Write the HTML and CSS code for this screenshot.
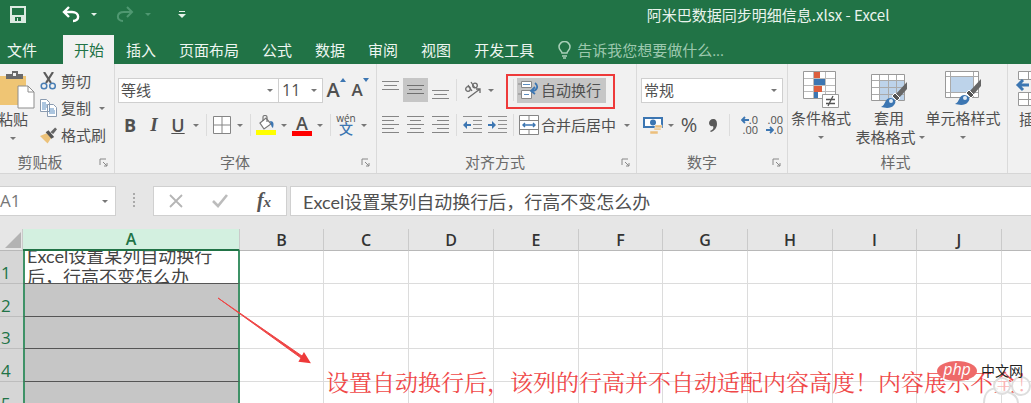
FILE: index.html
```html
<!DOCTYPE html>
<html lang="zh-CN">
<head>
<meta charset="utf-8">
<title>阿米巴数据同步明细信息.xlsx - Excel</title>
<link rel="stylesheet" href="styles.css">
</head>
<body>
<header class="titlebar">
  <div class="quick">
    <button class="quick-btn" aria-label="保存"><svg width="16" height="17" viewBox="0 0 16 17"><path d="M1 1h14v15H1z" fill="none" stroke="#dcebe2" stroke-width="2"/><path d="M1 9h14v7H1z" fill="#dcebe2"/><path d="M5 11h6v4H5z" fill="#217346"/><path d="M7 12h1v3H7z" fill="#dcebe2"/></svg></button>
    <button class="quick-btn undo" aria-label="撤消"><svg width="18" height="17" viewBox="0 0 18 17"><path d="M7 1L2 6l5 5M2 6h8c8 0 8 9 1 9" fill="none" stroke="#fff" stroke-width="2.4"/></svg></button>
    <button class="caret-btn" aria-label="撤消列表"><span class="caret light"></span></button>
    <button class="quick-btn redo" aria-label="恢复"><svg width="18" height="17" viewBox="0 0 18 17"><path d="M11 1l5 5-5 5M16 6H8c-8 0-8 9-1 9" fill="none" stroke="#4f9871" stroke-width="2"/></svg></button>
    <button class="caret-btn" aria-label="恢复列表"><span class="caret dim"></span></button>
    <button class="caret-btn customise" aria-label="自定义快速访问工具栏"><svg width="8" height="7" viewBox="0 0 8 7"><path d="M1 0h6v1H1zM0 3h8L4 7z" fill="#e6f1ea"/></svg></button>
  </div>
  <h1 class="doc-title">阿米巴数据同步明细信息.xlsx - Excel</h1>
</header>
<nav class="tabs">
  <button class="tab file">文件</button>
  <button class="tab active">开始</button>
  <button class="tab">插入</button>
  <button class="tab">页面布局</button>
  <button class="tab">公式</button>
  <button class="tab">数据</button>
  <button class="tab">审阅</button>
  <button class="tab">视图</button>
  <button class="tab">开发工具</button>
  <label class="tell">
    <svg width="13" height="18" viewBox="0 0 13 18"><path d="M4 12c0-2-3-3-3-6a5.300 5.300 0 0 1 11 0c0 3-3 4-3 6zM4 15h5M5 17h3" fill="none" stroke="#a9d0b9" stroke-width="1.500"/></svg>
    <input type="text" placeholder="告诉我您想要做什么..." aria-label="告诉我您想要做什么">
  </label>
</nav>

<div class="ribbon">
  <section class="group clipboard">
    <div class="clip-body">
      <button class="big paste">
        <svg width="44" height="38" viewBox="0 0 44 38"><path d="M4 5h31v29H4z" fill="#efc574"/><path d="M15 6V3h6V0h6v3h5v5H15z" fill="#6a6a6a"/><path d="M22 2h3v3h-3z" fill="#f1f1f1"/><path d="M27 15h10l6 6v16H27z" fill="#fff" stroke="#8d8d8d"/><path d="M37 15v6h6" fill="none" stroke="#8d8d8d"/></svg>
        <span>粘贴</span><span class="caret"></span>
      </button>
      <div class="clip-list">
        <button class="item"><svg width="17" height="18" viewBox="0 0 17 18"><path d="M4 0l7 11M13 0L6 11" stroke="#5c5c5c" stroke-width="2.200"/><circle cx="4" cy="14" r="2.800" fill="none" stroke="#4a7fb5" stroke-width="1.500"/><circle cx="12.500" cy="14" r="2.800" fill="none" stroke="#4a7fb5" stroke-width="1.500"/></svg>剪切</button>
        <button class="item"><svg width="17" height="18" viewBox="0 0 17 18"><path d="M.5.500h6l3 3v9h-9zM7.500 5.500h6l3 3v9h-9z" fill="#fff" stroke="#8a9bb0"/><path d="M2 4h4M2 6h5M2 8h5M2 10h4M9 10h5M9 12h6M9 14h6" stroke="#5b8dc0"/></svg>复制<span class="caret"></span></button>
        <button class="item"><svg width="17" height="17" viewBox="0 0 18 17"><path d="M0 9l7-3 5 5-4 6z" fill="#ecc27a"/><path d="M6 5l3-2 6 7-3 2z" fill="#555"/><path d="M11 5l5-5 2 2-4 5z" fill="#666"/></svg>格式刷</button>
      </div>
    </div>
    <footer class="group-foot"><h2>剪贴板</h2><button class="launch" aria-label="剪贴板设置"><svg width="9" height="9" viewBox="0 0 9 9"><path d="M1 7V1h6M4 4l4 4M8 5v3H5" fill="none" stroke="#888"/></svg></button></footer>
  </section>

  <section class="group font">
    <div class="group-body">
      <div class="row">
        <div class="pick wide"><select aria-label="字体"><option>等线</option></select></div>
        <div class="pick size"><select aria-label="字号"><option>11</option></select></div>
        <button class="tool grow" aria-label="增大字号"><span class="letter">A</span><svg width="6" height="12" viewBox="0 0 6 12"><path d="M0 4h6L3 0z" fill="#3c76b2"/></svg></button>
        <button class="tool shrink" aria-label="减小字号"><span class="letter">A</span><svg width="6" height="12" viewBox="0 0 6 12"><path d="M0 0h6L3 4z" fill="#3c76b2"/></svg></button>
      </div>
      <div class="row">
        <button class="tool bold">B</button>
        <button class="tool italic">I</button>
        <button class="tool under">U</button>
        <button class="caret-btn" aria-label="下划线样式"><span class="caret"></span></button>
        <i class="sep"></i>
        <button class="tool" aria-label="边框"><svg width="18" height="18" viewBox="0 0 18 18"><path d="M.5.500h17v17H.5zM9 1v16M1 9h16" fill="#fff" stroke="#858585"/></svg></button>
        <button class="caret-btn" aria-label="边框样式"><span class="caret"></span></button>
        <i class="sep"></i>
        <button class="tool" aria-label="填充颜色"><svg width="20" height="20" viewBox="0 0 20 20"><path d="M4 8l6-5 5 6-7 5z" fill="#fff" stroke="#777" stroke-width="1.200"/><path d="M7 6V2c0-2 4-2 4 0v5" fill="none" stroke="#777" stroke-width="1.200"/><path d="M14 6c4 0 4 3 3 7-2-1-2-4-3-7z" fill="#3c76b2"/><path d="M0 15h20v5H0z" fill="#ff0"/></svg></button>
        <button class="caret-btn" aria-label="填充颜色列表"><span class="caret"></span></button>
        <button class="tool colour" aria-label="字体颜色"><span>A</span></button>
        <button class="caret-btn" aria-label="字体颜色列表"><span class="caret"></span></button>
        <i class="sep"></i>
        <button class="tool pinyin" aria-label="拼音"><span>wén</span><b>文</b></button>
        <button class="caret-btn" aria-label="拼音设置"><span class="caret"></span></button>
      </div>
    </div>
    <footer class="group-foot"><h2>字体</h2><button class="launch" aria-label="字体设置"><svg width="9" height="9" viewBox="0 0 9 9"><path d="M1 7V1h6M4 4l4 4M8 5v3H5" fill="none" stroke="#888"/></svg></button></footer>
  </section>

  <section class="group align">
    <div class="group-body">
      <div class="row">
        <button class="tool" aria-label="顶端对齐"><svg width="17" height="20" viewBox="0 0 17 20"><path d="M0 1.500h17M2 5.500h13M0 9.500h17" stroke="#858585"/></svg></button>
        <button class="tool pressed" aria-label="垂直居中"><svg width="17" height="20" viewBox="0 0 17 20"><path d="M0 5.500h17M2 9.500h13M0 13.500h17" stroke="#707070"/></svg></button>
        <button class="tool" aria-label="底端对齐"><svg width="17" height="20" viewBox="0 0 17 20"><path d="M0 10.500h17M2 14.500h13M0 18.500h17" stroke="#858585"/></svg></button>
        <i class="sep"></i>
        <button class="tool" aria-label="方向"><svg width="18" height="18" viewBox="0 0 18 18"><g fill="none" stroke="#6b6b6b" stroke-width="1.300"><circle cx="4" cy="8" r="2.300"/><path d="M4 4l4 6M7 1l4 6"/><circle cx="11" cy="4.500" r="2.300"/><path d="M4 17L16 8M12 8h4v4"/></g></svg></button>
        <button class="caret-btn" aria-label="方向列表"><span class="caret"></span></button>
        <i class="sep last"></i>
        <div class="marked">
          <button class="item wrap pressed"><svg width="21" height="18" viewBox="0 0 21 18"><path d="M3.500.500h10v6h-10zM3.500 9.500h10v8h-10z" fill="#fff" stroke="#888"/><path d="M5 3.500h7M6 13.500h5" stroke="#5b8dc0"/><path d="M0 3h3M0 13h3" stroke="#888"/><path d="M17 2c4 3 2 8-3 8M17 6l-4 4 4 3" fill="none" stroke="#3c76b2" stroke-width="1.800"/></svg>自动换行</button>
          <span class="marker"></span>
        </div>
      </div>
      <div class="row">
        <button class="tool" aria-label="左对齐"><svg width="17" height="18" viewBox="0 0 17 18"><path d="M0 .500h17M0 4.500h12M0 8.500h17M0 12.500h12M0 16.500h17" stroke="#858585"/></svg></button>
        <button class="tool" aria-label="居中"><svg width="17" height="18" viewBox="0 0 17 18"><path d="M0 .500h17M3 4.500h11M0 8.500h17M3 12.500h11M0 16.500h17" stroke="#858585"/></svg></button>
        <button class="tool" aria-label="右对齐"><svg width="17" height="18" viewBox="0 0 17 18"><path d="M0 .500h17M5 4.500h12M0 8.500h17M5 12.500h12M0 16.500h17" stroke="#858585"/></svg></button>
        <i class="sep"></i>
        <button class="tool" aria-label="减少缩进量"><svg width="19" height="18" viewBox="0 0 19 18"><path d="M0 .500h19M10 4.500h9M10 8.500h9M10 12.500h9M0 16.500h19" stroke="#909090"/><path d="M8 8h-4v-3L0 9l4 4v-3h4z" fill="#3c76b2"/></svg></button>
        <button class="tool" aria-label="增加缩进量"><svg width="19" height="18" viewBox="0 0 19 18"><path d="M0 .500h19M10 4.500h9M10 8.500h9M10 12.500h9M0 16.500h19" stroke="#909090"/><path d="M0 8h4V5l4 4-4 4v-3H0z" fill="#3c76b2"/></svg></button>
        <i class="sep"></i>
        <button class="item merge"><svg width="20" height="20" viewBox="0 0 20 20"><path d="M.5.500h19v19H.5z" fill="#fff" stroke="#858585"/><path d="M1 5.500h18M1 14.500h18M10 1v4M10 15v4" stroke="#858585"/><path d="M4 10h12M6 8l-2 2 2 2M14 8l2 2-2 2" fill="none" stroke="#3c76b2" stroke-width="1.400"/></svg>合并后居中<span class="caret"></span></button>
      </div>
    </div>
    <footer class="group-foot"><h2>对齐方式</h2><button class="launch" aria-label="对齐设置"><svg width="9" height="9" viewBox="0 0 9 9"><path d="M1 7V1h6M4 4l4 4M8 5v3H5" fill="none" stroke="#888"/></svg></button></footer>
  </section>

  <section class="group number">
    <div class="group-body">
      <div class="row">
        <div class="pick format"><select aria-label="数字格式"><option>常规</option></select></div>
      </div>
      <div class="row">
        <button class="tool" aria-label="会计数字格式"><svg width="20" height="19" viewBox="0 0 20 19"><path d="M1 2h18v9H1z" fill="#fff" stroke="#3c76b2" stroke-width="2"/><circle cx="10" cy="6.500" r="3" fill="#3c76b2"/><path d="M12 9h7v3h-7zM11 12h7v2h-7zM7 15h8v3H7z" fill="#ecbf7c" stroke="#f1f1f1" stroke-width=".5"/></svg></button>
        <button class="caret-btn" aria-label="会计格式列表"><span class="caret"></span></button>
        <button class="tool percent">%</button>
        <button class="tool comma" aria-label="千位分隔样式"><svg width="8" height="13" viewBox="0 0 8 13"><path d="M1 12c3-1 4-3 3-5-2 1-4-1-4-3s2-4 4-4c3 0 4 2 4 5 0 4-3 7-6 8z" fill="#5a5a5a"/></svg></button>
        <i class="sep"></i>
        <button class="tool digits" aria-label="增加小数位数"><span><svg width="8" height="8" viewBox="0 0 8 8"><path d="M8 4H2M4 1L1 4l3 3" fill="none" stroke="#3c76b2" stroke-width="1.800"/></svg>.0</span><span>.00</span></button>
        <button class="tool digits" aria-label="减少小数位数"><span>.00</span><span><svg width="8" height="8" viewBox="0 0 8 8"><path d="M0 4h6M4 1l3 3-3 3" fill="none" stroke="#3c76b2" stroke-width="1.800"/></svg>.0</span></button>
      </div>
    </div>
    <footer class="group-foot"><h2>数字</h2><button class="launch" aria-label="数字设置"><svg width="9" height="9" viewBox="0 0 9 9"><path d="M1 7V1h6M4 4l4 4M8 5v3H5" fill="none" stroke="#888"/></svg></button></footer>
  </section>

  <section class="group styles">
    <div class="style-list">
      <button class="big cond">
        <svg width="38" height="38" viewBox="0 0 38 38"><path d="M1.500.500h32v27h-32z" fill="#fff" stroke="#999"/><path d="M2 7.500h31M2 14.500h31M2 20.500h31M11.500 1v26M23.500 1v26" stroke="#bbb"/><path d="M12 1h6v6h-6zM12 15h8v6h-8z" fill="#dd5f3d"/><path d="M12 8h11v6H12zM12 21h4v6h-4z" fill="#3c76b2"/><path d="M20.500 23.500h16v13h-16z" fill="#fff" stroke="#999"/><path d="M24 28.500h9M24 32.500h9M31 25l-5 10" stroke="#555" stroke-width="1.300"/></svg>
        <span>条件格式</span><span class="caret"></span>
      </button>
      <button class="big">
        <svg width="38" height="38" viewBox="0 0 38 38"><path d="M1.500 3.500h33v26h-33z" fill="#fff" stroke="#999"/><path d="M10 10h24v19H10z" fill="#bdd3ea"/><path d="M2 9.500h32M2 16.500h32M2 23.500h32M9.500 4v25M18.500 4v25M26.500 4v25" stroke="#aaa"/><path d="M37 11v7l-8 9-4-3z" fill="#666"/><path d="M25 22l5 5-3 3-5-5z" fill="#555" stroke="#fff"/><path d="M11 36c5-2 3-8 9-9 5 0 7 4 4 7-3 4-9 3-13 2z" fill="#3c76b2"/><circle cx="21" cy="30" r="2" fill="#dfeaf5"/></svg>
        <span>套用</span><span class="with-caret">表格格式<span class="caret"></span></span>
      </button>
      <button class="big cellstyle">
        <svg width="38" height="38" viewBox="0 0 38 38"><path d="M1.500.500h33v26h-33z" fill="#fff" stroke="#999"/><path d="M2 5.500h32M2 21.500h32M6.500 1v25M29.500 1v25" stroke="#aaa"/><path d="M7 6h22v15H7z" fill="#bdd3ea"/><path d="M37 8v7l-8 9-4-3z" fill="#666"/><path d="M25 19l5 5-3 3-5-5z" fill="#555" stroke="#fff"/><path d="M11 33c5-2 3-8 9-9 5 0 7 4 4 7-3 4-9 3-13 2z" fill="#3c76b2"/><circle cx="21" cy="27" r="2" fill="#dfeaf5"/></svg>
        <span>单元格样式</span><span class="caret"></span>
      </button>
    </div>
    <footer class="group-foot plain"><h2>样式</h2></footer>
  </section>

  <section class="group cells">
    <button class="big insert">
      <svg width="38" height="38" viewBox="0 0 38 38"><path d="M3.500.500h30v8h-30zM3.500 21.500h30v13h-30z" fill="#fff" stroke="#999"/><path d="M3 28.500h30M13.500 1v7M13.500 22v12" stroke="#999"/><path d="M18 14.500h18v4H18z" fill="#bdd3ea"/><path d="M14 14H3M8 9l-5 5 5 5" fill="none" stroke="#3c76b2" stroke-width="3"/></svg>
      <span>插入</span>
    </button>
  </section>
</div>

<div class="formula-bar">
  <div class="name-box pick"><select aria-label="名称框"><option>A1</option></select></div>
  <span class="grip"></span>
  <div class="entry-tools">
    <button aria-label="取消"><svg width="14" height="14" viewBox="0 0 14 14"><path d="M1 1l12 12M13 1L1 13" stroke="#b5b5b5" stroke-width="1.800"/></svg></button>
    <button aria-label="输入"><svg width="16" height="14" viewBox="0 0 16 14"><path d="M1 7l5 5L15 1" fill="none" stroke="#bcbcbc" stroke-width="2.600"/></svg></button>
    <button class="fx" aria-label="插入函数">f<small>x</small></button>
  </div>
  <input class="formula" type="text" aria-label="编辑栏" value="Excel设置某列自动换行后，行高不变怎么办">
</div>

<main class="sheet">
  <table class="grid">
    <colgroup><col class="c-head"><col class="c-a"><col class="c-n"><col class="c-w"><col class="c-w"><col class="c-w"><col class="c-n"><col class="c-w"><col class="c-w"><col class="c-n"><col class="c-w"><col class="c-w"></colgroup>
    <thead><tr><th class="corner"><svg width="16" height="16" viewBox="0 0 16 16"><path d="M16 0v16H0z" fill="#b3b3b3"/></svg></th><th class="on">A</th><th>B</th><th>C</th><th>D</th><th>E</th><th>F</th><th>G</th><th>H</th><th>I</th><th>J</th><th></th></tr></thead>
    <tbody>
      <tr><th>1</th><td class="sel first"><div class="clip">Excel设置某列自动换行后，行高不变怎么办</div></td><td></td><td></td><td></td><td></td><td></td><td></td><td></td><td></td><td></td><td></td></tr>
      <tr><th>2</th><td class="sel"></td><td></td><td></td><td></td><td></td><td></td><td></td><td></td><td></td><td></td><td></td></tr>
      <tr><th>3</th><td class="sel"></td><td></td><td></td><td></td><td></td><td></td><td></td><td></td><td></td><td></td><td></td></tr>
      <tr><th>4</th><td class="sel"></td><td></td><td></td><td></td><td></td><td></td><td></td><td></td><td></td><td></td><td></td></tr>
      <tr><th>5</th><td class="sel"></td><td></td><td></td><td></td><td></td><td></td><td></td><td></td><td></td><td></td><td></td></tr>
    </tbody>
  </table>
  <svg class="arrow" width="94" height="68" viewBox="0 0 94 68"><path d="M1 1l84 58-1 2z" fill="#ee4545" stroke="#ee4545"/><path d="M92 65l-9-1 4-7z" fill="#ee3a3a" stroke="#ee3a3a" stroke-width="2"/></svg>
  <p class="note">设置自动换行后，该列的行高并不自动适配内容高度！内容展示不全！</p>
  <svg class="watermark" width="50" height="28" viewBox="0 0 50 28"><g fill="#fff" fill-opacity=".6" stroke="#dedede" stroke-width="2"><path d="M2 28c0-12 8-16 14-14M36 28c0-8-10-14-20-10"/><circle cx="20" cy="11" r="8"/><circle cx="39" cy="11" r="9"/></g></svg>
  <div class="brand"><span class="php">php</span><span>中文网</span></div>
</main>
</body>
</html>
```
FILE: styles.css
```css
*, *::before, *::after { box-sizing: border-box; }

body {
  margin: 0;
  height: 100vh;
  overflow: hidden;
  display: flex;
  flex-direction: column;
  background: #e6e6e6;
  color: #505050;
  font: 15px/20px "Open Sans", "Noto Sans CJK SC", sans-serif;
}

button, input, select {
  margin: 0;
  padding: 0;
  border: 0;
  background: none;
  color: inherit;
  font: inherit;
  white-space: nowrap;
}

h1, h2, p { margin: 0; font: inherit; }
svg { display: block; flex: none; }

.caret {
  flex: none;
  width: 6px;
  border: 3px solid transparent;
  border-top-color: #777;
  border-bottom: 0;
}
.caret.light { border-top-color: #e6f1ea; }
.caret.dim { border-top-color: #4f9871; }
.caret-btn { flex: none; width: 12px; height: 24px; display: grid; place-items: center; }

/* Title bar */
.titlebar { display: flex; align-items: center; height: 29px; flex: none; background: #217346; color: #e9f3ed; }
.quick { width: 49%; display: flex; align-items: center; padding-left: 10px; }
.quick-btn { display: block; }
.undo { margin-left: 36px; }
.undo + .caret-btn, .redo + .caret-btn { margin-left: 8px; }
.redo { margin-left: 16px; }
.customise { margin-left: 22px; }
.doc-title { flex: 1; text-align: center; font-family: "Noto Sans CJK SC", sans-serif; }

/* Tabs */
.tabs { display: flex; align-items: flex-end; height: 35px; flex: none; background: #217346; }
.tab { height: 29px; padding: 0 11px 0 12px; color: #eef6f1; }
.tab.file { padding: 0 26px 0 7px; }
.tab.active { padding: 0 10px 0 11px; background: #f1f1f1; color: #217346; }
.tell { display: flex; align-items: center; gap: 6px; height: 29px; margin-left: 13px; }
.tell input { width: 180px; }
.tell input::placeholder { color: #9cc8ae; opacity: 1; }

/* Ribbon */
.ribbon { display: flex; height: 110px; flex: none; overflow: hidden; background: #f1f1f1; border-bottom: 1px solid #d6d6d6; }
.group { display: flex; flex-direction: column; flex: none; border-right: 1px solid #dadada; }
.group-body { flex: 1; display: flex; flex-direction: column; gap: 11px; padding-top: 14px; }
.row { display: flex; align-items: center; height: 24px; }
.group-foot { display: grid; grid-template-columns: 1fr 24px; align-items: center; height: 22px; color: #6a6a6a; text-align: center; }
.group-foot.plain { grid-template-columns: 1fr; padding-right: 4px; }
.launch { justify-self: end; padding-right: 6px; }

.tool { flex: none; width: 24px; height: 24px; display: flex; align-items: center; justify-content: center; }
.align .tool { width: 25px; }
.pressed { background: #c6c6c6; }
.item { display: flex; align-items: center; gap: 4px; }
.item .caret { margin-left: 4px; }
.sep { flex: none; width: 8px; height: 22px; display: flex; justify-content: center; }
.align .sep { width: 7px; }
.sep.last { margin-left: 13px; }
.sep::before { content: ""; width: 1px; background: #dcdcdc; }

.pick { display: grid; grid-template-columns: 1fr 16px; align-items: center; height: 25px; background: #fff; border: 1px solid #cfcfcf; }
.pick select { grid-area: 1 / 1 / 2 / 3; appearance: none; width: 100%; padding-left: 2px; }
.pick::after { content: ""; grid-area: 1 / 2; justify-self: center; width: 6px; border: 3px solid transparent; border-top-color: #777; border-bottom: 0; pointer-events: none; }

.big { display: flex; flex-direction: column; align-items: center; flex: none; line-height: 20px; }
.big > .caret { margin-top: 8px; }

/* Clipboard continues past the left edge of the window */
.clipboard { width: 125px; margin-left: -10px; }
.clip-body { flex: 1; display: flex; }
.paste { width: 46px; padding-top: 7px; }
.clip-list { display: flex; flex-direction: column; gap: 7px; padding: 7px 0 0 4px; }

.font { width: 262px; padding-left: 3px; }
.pick.wide { width: 161px; }
.pick.size { width: 44px; border-left: 0; }
.pick.size select { padding-left: 3px; font-size: 16px; }
.letter { font-size: 20px; font-weight: 600; }
.shrink .letter { font-size: 17px; }
.grow svg, .shrink svg { align-self: flex-start; }
.shrink, .grow { padding-left: 2px; }
.bold { font-size: 18px; font-weight: 700; }
.italic { font: italic 700 19px/24px "Liberation Serif", serif; }
.under { font-size: 18px; font-weight: 600; text-decoration: underline; }
.colour span { width: 20px; height: 21px; border-bottom: 5px solid #f00; font-size: 18px; font-weight: 600; line-height: 16px; text-align: center; }
.pinyin { flex-direction: column; font-size: 10px; line-height: 8px; }
.pinyin b { color: #3c76b2; font-size: 14px; font-weight: 500; line-height: 14px; }

.align { width: 260px; padding-left: 1px; }
.marked { position: relative; }
.wrap { height: 25px; padding: 0 5px 0 1px; gap: 2px; }
.marker { position: absolute; inset: -4px -9px -6px -11px; border: 2px solid #ee3a3a; pointer-events: none; }
.merge { padding-left: 2px; gap: 2px; }
.merge .caret { margin-left: 6px; }

.number { width: 151px; padding-left: 4px; }
.pick.format { width: 142px; }
.percent { font-size: 20px; }
.number .digits { width: 25px; flex-direction: column; align-items: flex-end; font-size: 11px; line-height: 10px; }
.digits span { display: flex; align-items: center; }

.styles { width: 220px; }
.style-list { flex: 1; display: flex; padding-top: 7px; }
.cond { width: 66px; }
.cond + .big { width: 70px; }
.cellstyle { width: 78px; }
.with-caret { display: flex; align-items: center; gap: 3px; padding-left: 2px; }
.style-list .big span { line-height: 19px; }
.cells { padding: 7px 0 0 7px; }

/* Formula bar */
.formula-bar { display: flex; flex: none; height: 55px; padding: 12px 0 13px; }
.formula-bar .pick, .entry-tools, .formula { height: 30px; background: #fff; border: 1px solid #d0d0d0; }
.formula-bar .name-box { width: 116px; grid-template-columns: 1fr 20px; border-left: 0; font-size: 17px; color: #777; }
.formula-bar .name-box select { padding-left: 0; }
.grip { width: 2px; height: 14px; margin: 7px 18px 0 17px; border-left: 2px dotted #aaa; }
.entry-tools { width: 134px; display: grid; grid-template-columns: repeat(3, 1fr); place-items: center; }
.fx { color: #555; font: italic 700 20px/24px "Liberation Serif", serif; }
.fx small { font-size: 15px; }
.formula { flex: 1; margin-left: 3px; padding-left: 12px; font-family: Lato, "Noto Sans CJK SC", sans-serif; font-size: 18px; border-right: 0; }

/* Sheet */
.sheet { position: relative; flex: 1; overflow: hidden; background: #fff; }
.grid { table-layout: fixed; width: 1086px; border-collapse: separate; border-spacing: 0; }
.c-head { width: 23px; }
.c-a { width: 217px; }
.c-w { width: 85px; }
.c-n { width: 84px; }
.grid th { padding: 0; font-weight: 400; }
.grid thead th { height: 22px; background: #e6e6e6; border-right: 1px solid #cacaca; border-bottom: 1px solid #b8b8b8; color: #333; font-size: 16px; line-height: 20px; font-weight: 600; }
.grid thead .on { background: #d3f0e0; color: #217346; border-bottom: 2px solid #217346; }
.grid .corner svg { margin-left: 5px; }
.grid tbody th { height: 33px; padding-left: 1px; background: #d6d6d6; border-bottom: 1px solid #bdbdbd; color: #217346; font-size: 17px; line-height: 20px; text-align: left; vertical-align: bottom; }
.grid tbody tr:nth-child(3) th { height: 32px; }
.grid td { padding: 0; border-right: 1px solid #dcdcdc; border-bottom: 1px solid #dcdcdc; }
.grid .sel { background: #c6c6c6; border-left: 2px solid #3f9267; border-right: 2px solid #3f9267; border-bottom: 1px solid #555; }
.grid .first { background: #fff; }
.clip { display: flex; align-items: center; height: 32px; padding: 0 20px 0 2px; overflow: hidden; font-family: Lato, "Noto Sans CJK SC", sans-serif; font-size: 18px; line-height: 21px; color: #444; }

/* Annotations over the sheet */
.arrow { position: absolute; left: 217px; top: 68px; }
.note { position: absolute; left: 326px; top: 139px; color: #f04848; font: 400 23px/28px "Noto Serif CJK SC", "Noto Sans CJK SC", serif; white-space: nowrap; }
.watermark { position: absolute; right: -1px; bottom: 0; }
.brand { position: absolute; left: 937px; top: 132px; display: flex; align-items: center; gap: 4px; color: #222; font-size: 14px; }
.php { width: 40px; height: 20px; border-radius: 50%; background: #ee6a69; color: #fff; font: italic 16px/16px "Open Sans", sans-serif; text-align: center; }
```
